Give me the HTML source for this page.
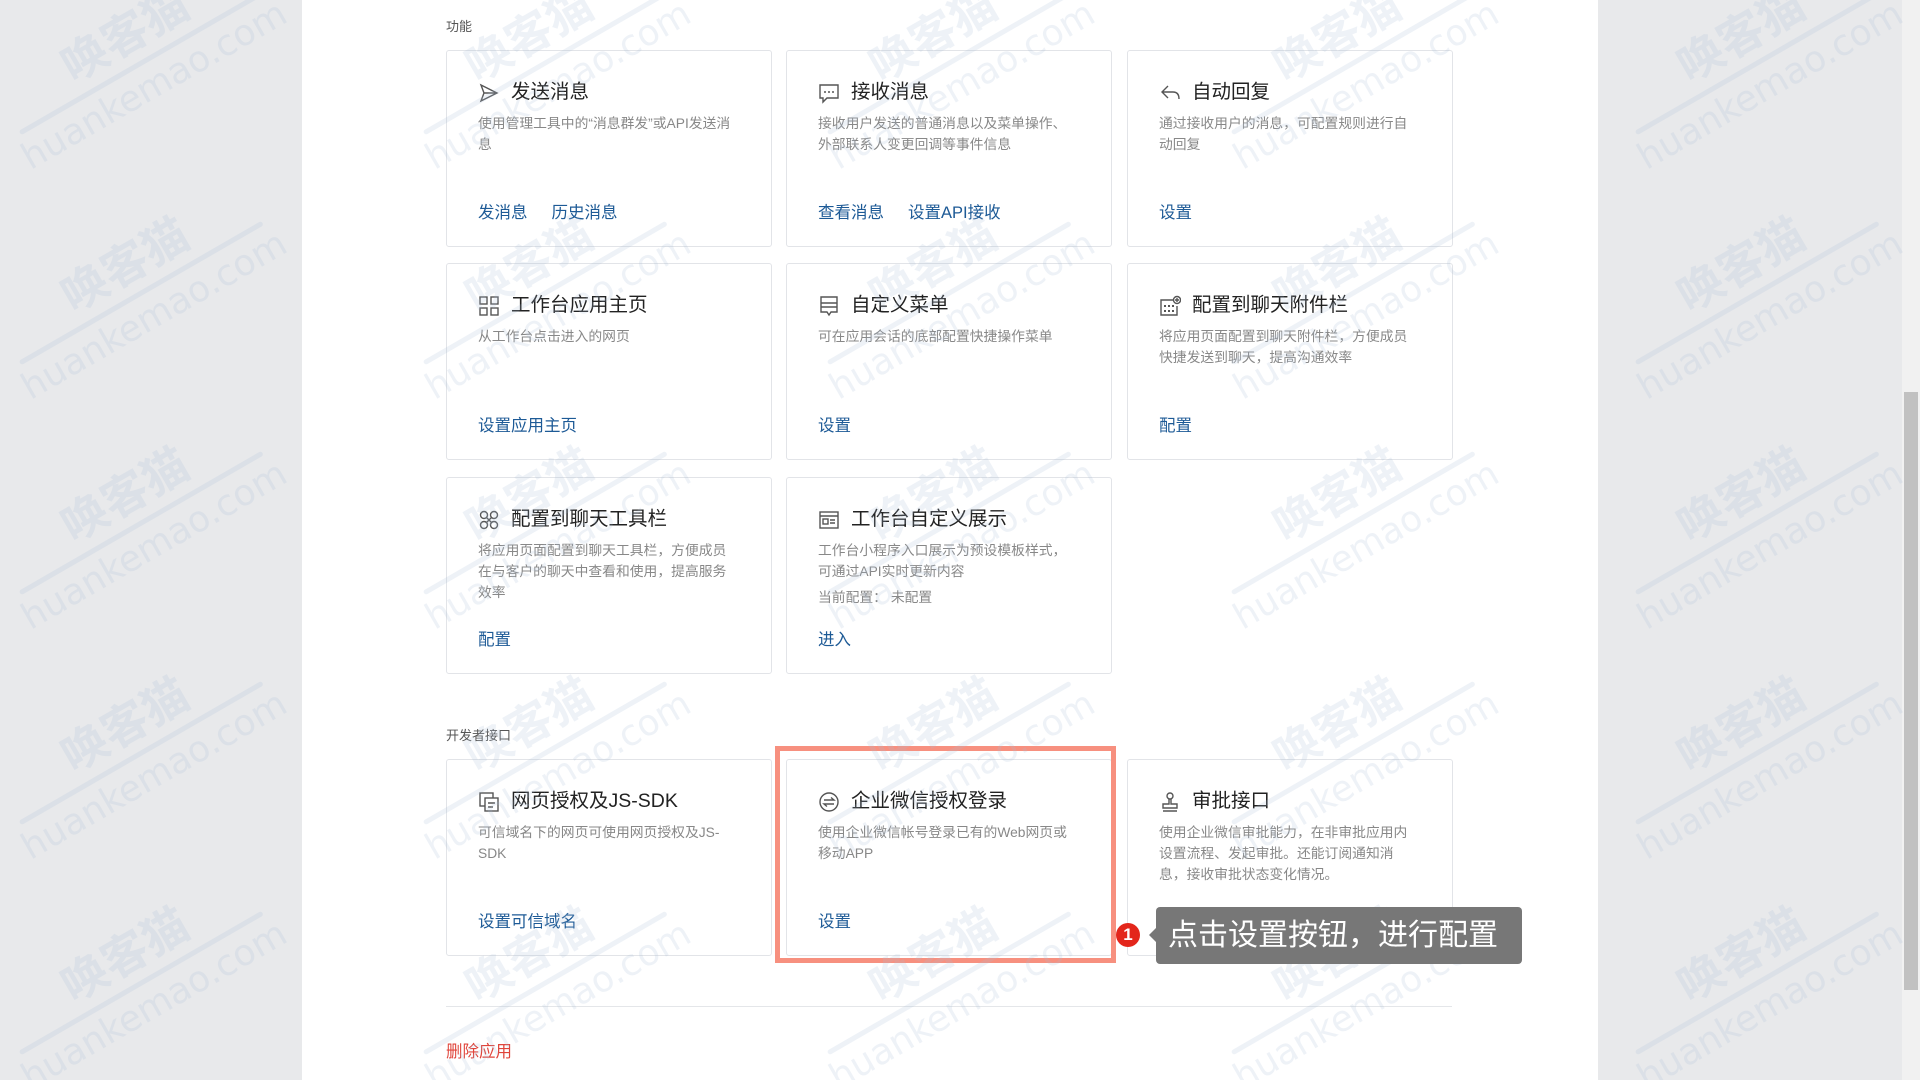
<!DOCTYPE html>
<html style="width:1920px;height:1080px;overflow:hidden;background:#e8e9eb"><head><meta charset="utf-8">
<style>
*{margin:0;padding:0;box-sizing:border-box}
body{width:1920px;height:1080px;overflow:hidden;background:#e8e9eb;font-family:"Liberation Sans","Noto Sans CJK SC",sans-serif;position:relative}
.panel{position:absolute;left:302px;top:0;width:1296px;height:1080px;background:#fff}
.lbl{position:absolute;left:446px;font-size:13px;color:#555;line-height:18px}
.card{position:absolute;width:326px;height:197px;border:1px solid #e2e4e8;border-radius:3px;background:#fff}
.card .ic{position:absolute;left:31px;top:31px;width:22px;height:22px}
.card .t{position:absolute;left:64px;top:29px;font-size:19.5px;color:#222;line-height:24px;white-space:nowrap}
.card .d{position:absolute;left:31px;top:62px;width:262px;font-size:13.8px;color:#888;line-height:21px}
.card .a{position:absolute;left:31px;top:151px;font-size:16.5px;color:#1d5a96;line-height:22px;white-space:nowrap}
.card .a span{margin-right:24px}
.wm{position:absolute;width:300px;height:140px;transform:translate(-50%,-50%) rotate(-30deg);color:rgba(170,188,215,0.2);text-align:center;pointer-events:none;z-index:5}
.wm b{display:block;font-size:46px;font-weight:bold;line-height:52px}
.wm i{display:block;height:5px;background:rgba(170,188,215,0.2);margin:4px 10px;border-radius:3px}
.wm s{display:block;text-decoration:none;font-size:36px;line-height:40px;font-family:"DejaVu Sans",sans-serif}
</style></head><body>
<div class="panel"></div>
<div class="lbl" style="top:18px">功能</div>

<div class="card" style="left:446px;top:50px">
<svg class="ic" viewBox="0 0 22 22"><path d="M3 3 L19 11 L3 19 L6 11 Z M6 11 H19" fill="none" stroke="#555" stroke-width="1.4"/></svg>
<div class="t">发送消息</div><div class="d">使用管理工具中的“消息群发”或API发送消息</div>
<div class="a"><span>发消息</span><span>历史消息</span></div></div>

<div class="card" style="left:786px;top:50px">
<svg class="ic" viewBox="0 0 22 22"><path d="M2 3 H20 V16 H9 L5 20 V16 H2 Z" fill="none" stroke="#555" stroke-width="1.4"/><circle cx="7" cy="10" r="1" fill="#555"/><circle cx="11" cy="10" r="1" fill="#555"/><circle cx="15" cy="10" r="1" fill="#555"/></svg>
<div class="t">接收消息</div><div class="d">接收用户发送的普通消息以及菜单操作、外部联系人变更回调等事件信息</div>
<div class="a"><span>查看消息</span><span>设置API接收</span></div></div>

<div class="card" style="left:1127px;top:50px">
<svg class="ic" viewBox="0 0 22 22"><path d="M9 4 L3 10 L9 16 M3 10 H14 Q20 10 20 17" fill="none" stroke="#555" stroke-width="1.4"/></svg>
<div class="t">自动回复</div><div class="d">通过接收用户的消息，可配置规则进行自动回复</div>
<div class="a"><span>设置</span></div></div>

<div class="card" style="left:446px;top:263px">
<svg class="ic" viewBox="0 0 22 22"><g fill="none" stroke="#555" stroke-width="1.4"><rect x="2" y="2" width="7" height="7"/><rect x="13" y="2" width="7" height="7"/><rect x="2" y="13" width="7" height="7"/><rect x="13" y="13" width="7" height="7"/></g></svg>
<div class="t">工作台应用主页</div><div class="d">从工作台点击进入的网页</div>
<div class="a"><span>设置应用主页</span></div></div>

<div class="card" style="left:786px;top:263px">
<svg class="ic" viewBox="0 0 22 22"><path d="M3 2 H19 V17 H13 L11 20 L9 17 H3 Z M3 8 H19 M3 12 H19" fill="none" stroke="#555" stroke-width="1.4"/></svg>
<div class="t">自定义菜单</div><div class="d">可在应用会话的底部配置快捷操作菜单</div>
<div class="a"><span>设置</span></div></div>

<div class="card" style="left:1127px;top:263px">
<svg class="ic" viewBox="0 0 22 22"><g fill="none" stroke="#555" stroke-width="1.4"><path d="M14 5 H2 V20 H18 V11"/><circle cx="18" cy="5" r="3.5"/><path d="M18 3 V7 M16 5 H20"/></g><g fill="#555"><rect x="5" y="10" width="2" height="2"/><rect x="9" y="10" width="2" height="2"/><rect x="13" y="10" width="2" height="2"/><rect x="5" y="15" width="2" height="2"/><rect x="9" y="15" width="2" height="2"/><rect x="13" y="15" width="2" height="2"/></g></svg>
<div class="t">配置到聊天附件栏</div><div class="d">将应用页面配置到聊天附件栏，方便成员快捷发送到聊天，提高沟通效率</div>
<div class="a"><span>配置</span></div></div>

<div class="card" style="left:446px;top:477px">
<svg class="ic" viewBox="0 0 22 22"><g fill="none" stroke="#555" stroke-width="1.4"><circle cx="6" cy="6" r="3.5"/><circle cx="16" cy="6" r="3.5"/><circle cx="6" cy="16" r="3.5"/><circle cx="16" cy="16" r="3.5"/><path d="M8 8 L14 14 M14 8 L8 14"/></g></svg>
<div class="t">配置到聊天工具栏</div><div class="d">将应用页面配置到聊天工具栏，方便成员在与客户的聊天中查看和使用，提高服务效率</div>
<div class="a"><span>配置</span></div></div>

<div class="card" style="left:786px;top:477px">
<svg class="ic" viewBox="0 0 22 22"><g fill="none" stroke="#555" stroke-width="1.4"><rect x="2" y="3" width="18" height="16"/><path d="M2 7 H20"/><rect x="5" y="10" width="5" height="5"/><path d="M12 11 H17 M12 14 H17"/></g></svg>
<div class="t">工作台自定义展示</div><div class="d">工作台小程序入口展示为预设模板样式，可通过API实时更新内容<div style="margin-top:5px">当前配置：&nbsp;未配置</div></div>
<div class="a"><span>进入</span></div></div>

<div class="lbl" style="top:727px">开发者接口</div>

<div class="card" style="left:446px;top:759px">
<svg class="ic" viewBox="0 0 22 22"><g fill="none" stroke="#555" stroke-width="1.4"><rect x="2" y="2" width="13" height="13"/><rect x="7" y="7" width="13" height="13" fill="#fff"/><path d="M10 12 H17 M10 16 H15"/></g></svg>
<div class="t">网页授权及JS-SDK</div><div class="d">可信域名下的网页可使用网页授权及JS-SDK</div>
<div class="a"><span>设置可信域名</span></div></div>

<div class="card" style="left:786px;top:759px">
<svg class="ic" viewBox="0 0 22 22"><g fill="none" stroke="#555" stroke-width="1.4"><circle cx="11" cy="11" r="9"/><path d="M6 9 H16 L13 6.5 M16 13 H6 L9 15.5"/></g></svg>
<div class="t">企业微信授权登录</div><div class="d">使用企业微信帐号登录已有的Web网页或移动APP</div>
<div class="a"><span>设置</span></div></div>

<div class="card" style="left:1127px;top:759px">
<svg class="ic" viewBox="0 0 22 22"><g fill="none" stroke="#555" stroke-width="1.4"><circle cx="11" cy="5" r="3"/><path d="M10 8 V13 H4 V17 H18 V13 H12 V8 M4 20 H18"/></g></svg>
<div class="t">审批接口</div><div class="d">使用企业微信审批能力，在非审批应用内设置流程、发起审批。还能订阅通知消息，接收审批状态变化情况。</div>
<div class="a"><span>设置</span></div></div>

<div style="position:absolute;left:775px;top:746px;width:341px;height:217px;border:5px solid #f7907f"></div>

<div style="position:absolute;left:1116px;top:923px;width:24px;height:24px;border-radius:50%;background:#e3261b;color:#fff;font-weight:bold;font-size:17px;text-align:center;line-height:24px;z-index:6">1</div>
<div style="position:absolute;left:1156px;top:907px;width:366px;height:57px;background:#777;border-radius:4px;color:#fff;font-size:30px;line-height:57px;padding-left:12px;z-index:6;white-space:nowrap">点击设置按钮，进行配置
<div style="position:absolute;left:-7px;top:21px;width:0;height:0;border-top:7px solid transparent;border-bottom:7px solid transparent;border-right:7px solid #777"></div></div>

<div style="position:absolute;left:446px;top:1006px;width:1006px;height:1px;background:#e4e6e9"></div>
<div style="position:absolute;left:446px;top:1041px;font-size:16.5px;color:#e0443a;line-height:22px">删除应用</div>

<div style="position:absolute;left:1902px;top:0;width:18px;height:1080px;background:#f1f1f1"></div>
<div style="position:absolute;left:1904px;top:392px;width:14px;height:598px;background:#c1c1c1"></div>

<div class="wm" style="left:147px;top:73px"><b>唤客猫</b><i></i><s>huankemao.com</s></div>
<div class="wm" style="left:147px;top:303px"><b>唤客猫</b><i></i><s>huankemao.com</s></div>
<div class="wm" style="left:147px;top:533px"><b>唤客猫</b><i></i><s>huankemao.com</s></div>
<div class="wm" style="left:147px;top:763px"><b>唤客猫</b><i></i><s>huankemao.com</s></div>
<div class="wm" style="left:147px;top:993px"><b>唤客猫</b><i></i><s>huankemao.com</s></div>
<div class="wm" style="left:551px;top:73px"><b>唤客猫</b><i></i><s>huankemao.com</s></div>
<div class="wm" style="left:551px;top:303px"><b>唤客猫</b><i></i><s>huankemao.com</s></div>
<div class="wm" style="left:551px;top:533px"><b>唤客猫</b><i></i><s>huankemao.com</s></div>
<div class="wm" style="left:551px;top:763px"><b>唤客猫</b><i></i><s>huankemao.com</s></div>
<div class="wm" style="left:551px;top:993px"><b>唤客猫</b><i></i><s>huankemao.com</s></div>
<div class="wm" style="left:955px;top:73px"><b>唤客猫</b><i></i><s>huankemao.com</s></div>
<div class="wm" style="left:955px;top:303px"><b>唤客猫</b><i></i><s>huankemao.com</s></div>
<div class="wm" style="left:955px;top:533px"><b>唤客猫</b><i></i><s>huankemao.com</s></div>
<div class="wm" style="left:955px;top:763px"><b>唤客猫</b><i></i><s>huankemao.com</s></div>
<div class="wm" style="left:955px;top:993px"><b>唤客猫</b><i></i><s>huankemao.com</s></div>
<div class="wm" style="left:1359px;top:73px"><b>唤客猫</b><i></i><s>huankemao.com</s></div>
<div class="wm" style="left:1359px;top:303px"><b>唤客猫</b><i></i><s>huankemao.com</s></div>
<div class="wm" style="left:1359px;top:533px"><b>唤客猫</b><i></i><s>huankemao.com</s></div>
<div class="wm" style="left:1359px;top:763px"><b>唤客猫</b><i></i><s>huankemao.com</s></div>
<div class="wm" style="left:1359px;top:993px"><b>唤客猫</b><i></i><s>huankemao.com</s></div>
<div class="wm" style="left:1763px;top:73px"><b>唤客猫</b><i></i><s>huankemao.com</s></div>
<div class="wm" style="left:1763px;top:303px"><b>唤客猫</b><i></i><s>huankemao.com</s></div>
<div class="wm" style="left:1763px;top:533px"><b>唤客猫</b><i></i><s>huankemao.com</s></div>
<div class="wm" style="left:1763px;top:763px"><b>唤客猫</b><i></i><s>huankemao.com</s></div>
<div class="wm" style="left:1763px;top:993px"><b>唤客猫</b><i></i><s>huankemao.com</s></div>
</body></html>
